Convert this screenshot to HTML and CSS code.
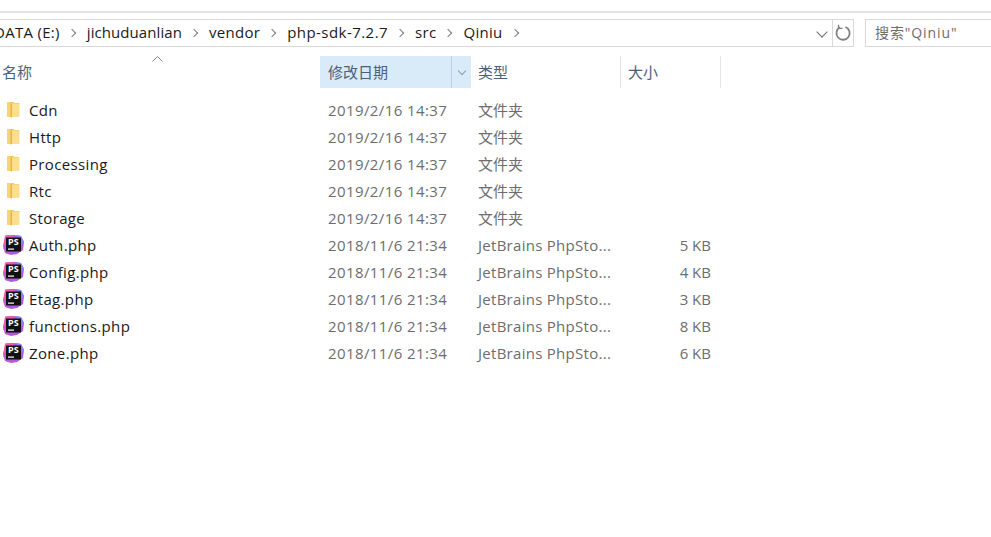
FILE: index.html
```html
<!DOCTYPE html>
<html lang="en">
<head>
    <meta charset="UTF-8">
    <meta name="viewport" content="width=device-width, initial-scale=1.0">
    <title>Qiniu</title>
    <link rel="stylesheet" href="styles.css">
</head>
<body>
    <svg class="defs" width="0" height="0">
        <symbol id="folder" viewBox="0 0 14 18">
            <path d="M1 1h6.500l1 1h4.500v13.500H1z" fill="#f3c65c"/>
            <path d="M5 2.500h8.500v13H5z" fill="#fcdf8c"/>
            <path d="M1 1h3.500l1 1.500v14L1 15.500z" fill="#f9d477"/>
            <path d="M4.500 2l1.500.500v14l-1.500-.800z" fill="#e9b44a"/>
        </symbol>
        <symbol id="ps" viewBox="0 0 21 20">
            <path d="M3 0.500l8-.500 7 1 3 6-1 8-6 4-6 1-6-2-2-7z" fill="#b05ae0"/>
            <path d="M2 0.500l9-.500-2 6-9 6z" fill="#ee5aa8"/>
            <path d="M13 0l5 1 3 6-3 3z" fill="#7f86f5"/>
            <path d="M0 13l5-2-1 8z" fill="#c95fd8"/>
            <rect x="3" y="2.500" width="15" height="14" fill="#111"/>
            <rect x="5" y="13.500" width="6" height="1.200" fill="#fff"/>
        </symbol>
    </svg>

    <div class="top-line"></div>

    <div class="toolbar">
        <div class="address">
            <div class="crumbs">
                <span>DATA (E:)</span><i class="sep"></i>
                <span class="tight">jichuduanlian</span><i class="sep"></i>
                <span>vendor</span><i class="sep"></i>
                <span class="wide">php-sdk-7.2.7</span><i class="sep"></i>
                <span>src</span><i class="sep"></i>
                <span>Qiniu</span><i class="sep"></i>
            </div>
            <div class="drop"><i class="chevron"></i></div>
            <div class="refresh">
                <svg width="18" height="18" viewBox="0 0 18 18"><path d="M6 3.300A6.600 6.600 0 1 0 11.500 3" fill="none" stroke="#808080" stroke-width="1.800"/><path d="M4.500 0.800v3.600h4" fill="none" stroke="#808080" stroke-width="1.300"/></svg>
            </div>
        </div>
        <div class="search">搜索"Qiniu"</div>
    </div>

    <div class="header">
        <div class="col col-name head">名称<svg class="sort" width="11" height="6" viewBox="0 0 11 6"><path d="M0.500 5.500l5-5 5 5" fill="none" stroke="#888"/></svg></div>
        <div class="col col-date head active">修改日期<span class="head-drop"><i class="chevron small"></i></span></div>
        <div class="col col-type head">类型</div>
        <div class="col col-size head">大小</div>
    </div>

    <div class="rows">
        <div class="row"><div class="col col-name"><svg class="icon"><use href="#folder"/></svg>Cdn</div><div class="col col-date">2019/2/16 14:37</div><div class="col col-type cjk">文件夹</div><div class="col col-size"></div></div>
        <div class="row"><div class="col col-name"><svg class="icon"><use href="#folder"/></svg>Http</div><div class="col col-date">2019/2/16 14:37</div><div class="col col-type cjk">文件夹</div><div class="col col-size"></div></div>
        <div class="row"><div class="col col-name"><svg class="icon"><use href="#folder"/></svg>Processing</div><div class="col col-date">2019/2/16 14:37</div><div class="col col-type cjk">文件夹</div><div class="col col-size"></div></div>
        <div class="row"><div class="col col-name"><svg class="icon"><use href="#folder"/></svg>Rtc</div><div class="col col-date">2019/2/16 14:37</div><div class="col col-type cjk">文件夹</div><div class="col col-size"></div></div>
        <div class="row"><div class="col col-name"><svg class="icon"><use href="#folder"/></svg>Storage</div><div class="col col-date">2019/2/16 14:37</div><div class="col col-type cjk">文件夹</div><div class="col col-size"></div></div>
        <div class="row"><div class="col col-name"><svg class="icon php"><use href="#ps"/></svg><span class="ps-tag">PS</span>Auth.php</div><div class="col col-date">2018/11/6 21:34</div><div class="col col-type">JetBrains PhpSto...</div><div class="col col-size">5 KB</div></div>
        <div class="row"><div class="col col-name"><svg class="icon php"><use href="#ps"/></svg><span class="ps-tag">PS</span>Config.php</div><div class="col col-date">2018/11/6 21:34</div><div class="col col-type">JetBrains PhpSto...</div><div class="col col-size">4 KB</div></div>
        <div class="row"><div class="col col-name"><svg class="icon php"><use href="#ps"/></svg><span class="ps-tag">PS</span>Etag.php</div><div class="col col-date">2018/11/6 21:34</div><div class="col col-type">JetBrains PhpSto...</div><div class="col col-size">3 KB</div></div>
        <div class="row"><div class="col col-name"><svg class="icon php"><use href="#ps"/></svg><span class="ps-tag">PS</span>functions.php</div><div class="col col-date">2018/11/6 21:34</div><div class="col col-type">JetBrains PhpSto...</div><div class="col col-size">8 KB</div></div>
        <div class="row"><div class="col col-name"><svg class="icon php"><use href="#ps"/></svg><span class="ps-tag">PS</span>Zone.php</div><div class="col col-date">2018/11/6 21:34</div><div class="col col-type">JetBrains PhpSto...</div><div class="col col-size">6 KB</div></div>
    </div>
</body>
</html>
```

FILE: styles.css
```css
* {
    margin: 0;
    padding: 0;
    box-sizing: border-box;
}

html, body {
    height: 100%;
    overflow: hidden;
    background: #fff;
}

body {
    font-family: "Open Sans", "Noto Sans CJK SC", sans-serif;
    font-size: 15px;
    color: #1a1a1a;
    padding-top: 11px;
}

.defs {
    display: block;
    height: 0;
}

.top-line {
    height: 2px;
    background: #e3e3e3;
}

/* address bar + search */
.toolbar {
    display: flex;
    margin-top: 6px;
    height: 28px;
}

.address {
    display: flex;
    width: 854px;
    flex: none;
    border-top: 1px solid #d9d9d9;
    border-bottom: 1px solid #d9d9d9;
    border-right: 1px solid #d9d9d9;
}

.crumbs {
    flex: 1;
    display: flex;
    align-items: center;
    margin-left: -6px;
    padding-bottom: 2px;
    white-space: nowrap;
    letter-spacing: 0.3px;
}

.crumbs .tight { letter-spacing: 0.07px; }
.crumbs .wide { letter-spacing: 0.45px; }

.sep {
    width: 6px;
    height: 6px;
    border-top: 1.500px solid #7c7c7c;
    border-right: 1.500px solid #7c7c7c;
    transform: rotate(45deg);
    margin: 2px 12px 0 9px;
}

.drop {
    width: 20px;
    display: flex;
    align-items: center;
    justify-content: center;
}

.chevron {
    display: block;
    width: 8px;
    height: 8px;
    border-right: 1.600px solid #707070;
    border-bottom: 1.600px solid #707070;
    transform: rotate(45deg);
    margin-top: -2px;
}

.chevron.small {
    width: 6px;
    height: 6px;
    border-width: 1px;
    border-color: #8a9aa8;
}

.refresh {
    width: 21px;
    border-left: 1px solid #d9d9d9;
    display: flex;
    align-items: center;
    justify-content: center;
}

.search {
    margin-left: 11px;
    flex: 1;
    border: 1px solid #d9d9d9;
    border-right: none;
    padding-left: 9px;
    line-height: 26px;
    font-size: 14px;
    letter-spacing: 0.9px;
    color: #6d6d6d;
}

/* list */
.header,
.row {
    display: flex;
}

.header {
    margin-top: 9px;
    height: 32px;
}

.col-name { width: 320px; flex: none; }
.col-date { width: 151px; flex: none; }
.col-type { width: 150px; flex: none; }
.col-size { width: 100px; flex: none; }

.head {
    display: flex;
    align-items: center;
    color: #4c607a;
    font-size: 15px;
    padding-left: 7px;
    padding-bottom: 2px;
    border-right: 1px solid #e5e5e5;
    position: relative;
}

.head.col-name {
    padding-left: 2px;
    border-right: none;
}

.head.col-date { padding-left: 8px; border-right: none; }

.active {
    background: #d9ebf9;
}

.head-drop {
    position: absolute;
    right: 0;
    top: 0;
    bottom: 0;
    width: 20px;
    border-left: 1px solid #bcd0e2;
    display: flex;
    align-items: center;
    justify-content: center;
}

.sort {
    position: absolute;
    left: 152px;
    top: 0;
}

.rows {
    margin-top: 9px;
}

.row {
    height: 27px;
    line-height: 26px;
    letter-spacing: 0.35px;
}

.row .col-name {
    display: flex;
    align-items: center;
    position: relative;
    padding-left: 4px;
    padding-bottom: 2px;
}

.icon {
    width: 18px;
    height: 18px;
    margin-right: 7px;
    flex: none;
}

.icon.php {
    width: 21px;
    height: 20px;
    margin-left: -1px;
    margin-right: 5px;
}

.ps-tag {
    position: absolute;
    left: 8px;
    top: 5px;
    font-size: 9px;
    line-height: 10px;
    font-weight: 700;
    letter-spacing: 0;
    color: #fff;
}

.row .col-date {
    padding-left: 8px;
    color: #6d6d6d;
    letter-spacing: 0.4px;
}

.row .col-type {
    padding-left: 7px;
    color: #6d6d6d;
    letter-spacing: 0.28px;
}

.row .col-type.cjk {
    letter-spacing: 0;
}

.row .col-size {
    padding-right: 10px;
    text-align: right;
    color: #6d6d6d;
    letter-spacing: 0;
}
```
